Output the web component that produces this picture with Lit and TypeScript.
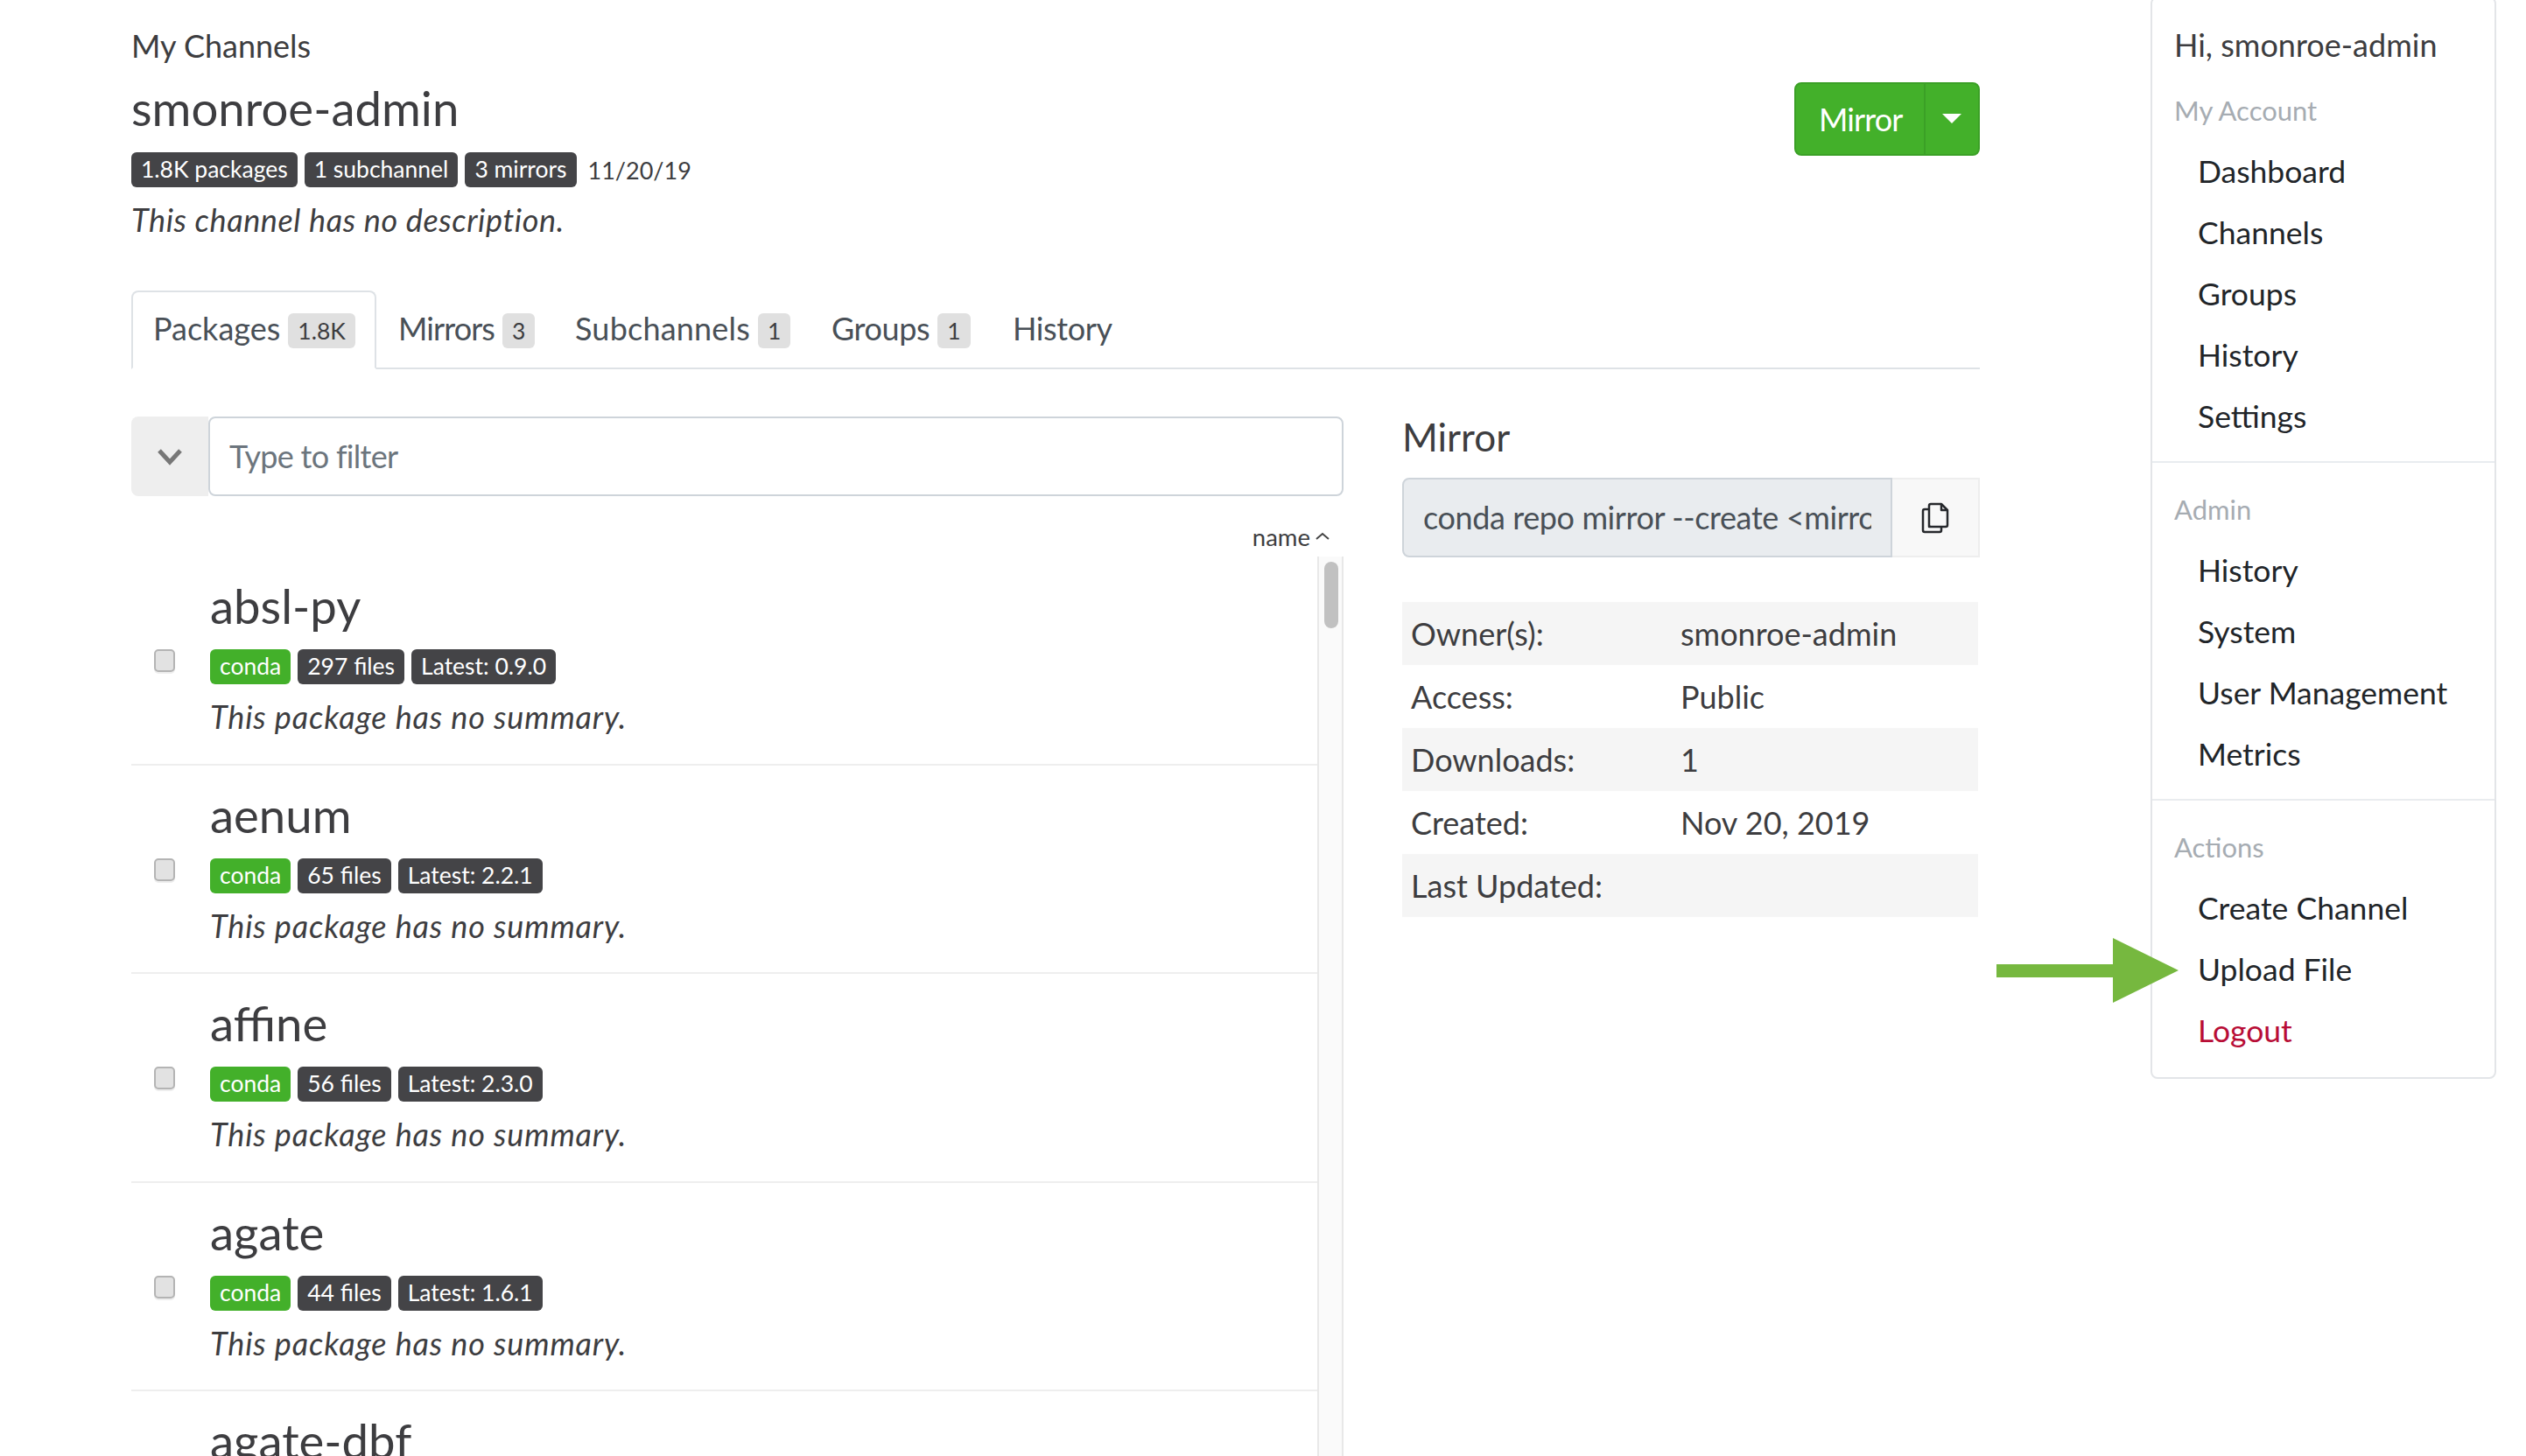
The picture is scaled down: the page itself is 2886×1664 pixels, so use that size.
import { LitElement, html, css } from "lit";
import { customElement } from "lit/decorators.js";

type Pkg = { name: string; files?: string; latest?: string };

const packages: Pkg[] = [
  { name: "absl-py", files: "297 files", latest: "Latest: 0.9.0" },
  { name: "aenum", files: "65 files", latest: "Latest: 2.2.1" },
  { name: "affine", files: "56 files", latest: "Latest: 2.3.0" },
  { name: "agate", files: "44 files", latest: "Latest: 1.6.1" },
  { name: "agate-dbf" },
];

const tabs = [
  { label: "Packages", count: "1.8K" },
  { label: "Mirrors", count: "3" },
  { label: "Subchannels", count: "1" },
  { label: "Groups", count: "1" },
  { label: "History", count: "" },
];

const details = [
  ["Owner(s):", "smonroe-admin"],
  ["Access:", "Public"],
  ["Downloads:", "1"],
  ["Created:", "Nov 20, 2019"],
  ["Last Updated:", ""],
];

const menu = [
  { title: "My Account", items: ["Dashboard", "Channels", "Groups", "History", "Settings"] },
  { title: "Admin", items: ["History", "System", "User Management", "Metrics"] },
  { title: "Actions", items: ["Create Channel", "Upload File", "Logout"] },
];

@customElement("app-root")
export class AppRoot extends LitElement {
  static styles = css`
    :host {
      display: block;
      position: relative;
      width: 2886px;
      height: 1664px;
      overflow: hidden;
      background: #fff;
      color: #3d3d40;
      font-family: "Lato", "Liberation Sans", sans-serif;
      font-size: 36px;
    }

    .page {
      display: flex;
      align-items: flex-start;
    }

    .main {
      width: 2112px;
      margin-left: 150px;
      flex: none;
    }

    .header {
      display: flex;
      justify-content: space-between;
      align-items: flex-start;
    }

    .crumb {
      margin-top: 30px;
      line-height: 44px;
    }

    .title {
      margin: 16px 0 0;
      font-size: 54.5px;
      font-weight: 400;
      line-height: 66px;
    }

    .badges {
      display: flex;
      align-items: center;
      gap: 8px;
    }

    .head-badges {
      margin-top: 18px;
    }

    .badge {
      display: flex;
      align-items: center;
      height: 40px;
      padding: 0 11px 2px;
      box-sizing: border-box;
      border-radius: 6px;
      background: #444447;
      color: #fff;
      font-size: 26.5px;
    }

    .badge.conda {
      background: #43b02a;
    }

    .date {
      margin-left: 5px;
      font-size: 27px;
    }

    .note {
      font-style: italic;
      line-height: 48px;
      letter-spacing: 0.6px;
    }

    .head-note {
      margin-top: 13px;
    }

    .split-button {
      display: flex;
      height: 84px;
      margin-top: 94px;
      border: 2px solid #3ba026;
      border-radius: 8px;
      background: #43b02a;
      color: #fff;
      box-sizing: border-box;
    }

    .split-label {
      display: flex;
      align-items: center;
      width: 148px;
      padding-left: 26px;
      box-sizing: border-box;
      border-right: 2px solid #3ba026;
      letter-spacing: -0.9px;
    }

    .split-caret {
      display: flex;
      justify-content: center;
      width: 60px;
      padding-top: 34px;
      box-sizing: border-box;
    }

    .caret {
      width: 0;
      height: 0;
      border-left: 11px solid transparent;
      border-right: 11px solid transparent;
      border-top: 11px solid #fff;
    }

    .tabs {
      display: flex;
      height: 90px;
      margin-top: 57px;
      border-bottom: 2px solid #dee2e6;
      box-sizing: border-box;
    }

    .tab {
      display: flex;
      align-items: center;
      gap: 9px;
      height: 88px;
      padding: 0 0 5px 22px;
      box-sizing: border-box;
      border: 2px solid transparent;
      border-bottom: 0;
      color: #495057;
      letter-spacing: -0.4px;
    }

    .tab:nth-child(1) {
      width: 280px;
      margin-right: 2px;
      padding-left: 23px;
      border-color: #dee2e6;
      border-radius: 8px 8px 0 0;
      height: 90px;
      border-bottom: 2px solid #fff;
      letter-spacing: 0;
    }

    .tab:nth-child(2) {
      width: 202px;
      padding-left: 21px;
      letter-spacing: -0.9px;
    }

    .tab:nth-child(3) {
      width: 292px;
      padding-left: 21px;
      letter-spacing: 0.2px;
    }

    .tab:nth-child(4) {
      width: 207px;
    }

    .count {
      display: flex;
      align-items: center;
      height: 40px;
      padding: 0 11px;
      border-radius: 6px;
      background: #e0e0e0;
      color: #3d3d40;
      font-size: 26.5px;
      letter-spacing: 0;
      margin-top: 6px;
    }

    .content {
      display: flex;
      gap: 67px;
      margin-top: 54px;
    }

    .packages {
      width: 1385px;
      flex: none;
    }

    .filter {
      display: flex;
      height: 91px;
    }

    .filter-toggle {
      display: flex;
      align-items: center;
      justify-content: center;
      width: 88px;
      background: #eee;
      border-radius: 8px 0 0 8px;
    }

    .filter-input {
      flex: 1;
      display: flex;
      align-items: center;
      padding: 0 0 2px 22px;
      border: 2px solid #ced4da;
      border-radius: 8px;
      color: #6c757d;
      letter-spacing: -0.7px;
    }

    .sort {
      display: flex;
      justify-content: flex-end;
      align-items: center;
      gap: 6px;
      height: 40px;
      margin-top: 26px;
      padding-right: 16px;
      font-size: 27.5px;
    }

    .list {
      display: flex;
      margin-top: 3px;
      height: 1100px;
    }

    .rows {
      flex: 1;
    }

    .row {
      display: flex;
      height: 238.5px;
      padding-top: 20px;
      box-sizing: border-box;
      border-bottom: 2px solid #eee;
    }

    .check {
      appearance: none;
      flex: none;
      width: 24px;
      height: 26px;
      margin: 86px 40px 0 26px;
      border: 2px solid #b4b4b4;
      border-radius: 5px;
      background: #e2e2e2;
      box-shadow: 0 2px 0 #eee;
      box-sizing: border-box;
    }

    .name {
      font-size: 54.5px;
      line-height: 72px;
    }

    .row .badges {
      margin-top: 14px;
    }

    .row .note {
      margin-top: 13px;
      letter-spacing: 0.85px;
    }

    .scrollbar {
      width: 30px;
      flex: none;
      box-sizing: border-box;
      background: #fafafa;
      border-left: 2px solid #e8e8e8;
      border-right: 2px solid #e8e8e8;
      padding-top: 6px;
    }

    .thumb {
      width: 16px;
      height: 76px;
      margin-left: 6px;
      border-radius: 8px;
      background: #c1c1c1;
    }

    .info {
      flex: 1;
      min-width: 0;
    }

    .info h4 {
      margin: 0;
      font-size: 44px;
      font-weight: 400;
      line-height: 46px;
    }

    .mirror-cmd {
      display: flex;
      height: 91px;
      margin-top: 24px;
    }

    .cmd-text {
      flex: 1;
      min-width: 0;
      display: flex;
      align-items: center;
      padding: 0 22px 2px 22px;
      border: 2px solid #ced4da;
      border-radius: 8px 0 0 8px;
      background: #e9ecef;
      color: #495057;
      white-space: nowrap;
      letter-spacing: -0.4px;
      box-sizing: border-box;
    }

    .cmd-text span {
      overflow: hidden;
    }

    .cmd-copy {
      display: flex;
      align-items: center;
      justify-content: center;
      width: 100px;
      flex: none;
      box-sizing: border-box;
      border: 2px solid #eee;
      border-left: 0;
      background: #f8f8f8;
    }

    .details {
      margin-top: 51px;
    }

    .detail {
      display: flex;
      align-items: center;
      height: 72px;
      padding-left: 10px;
      margin-right: 2px;
    }

    .detail:nth-child(odd) {
      background: #f5f5f5;
    }

    .detail-key {
      width: 308px;
    }

    .sidebar {
      width: 395px;
      margin-left: 195px;
      margin-top: -4px;
      height: 1237px;
      flex: none;
      box-sizing: border-box;
      border: 2px solid #e3e5e8;
      border-radius: 8px;
    }

    .greeting {
      margin: 31px 0 0 25px;
      line-height: 44px;
    }

    .section {
      padding-top: 18px;
      padding-bottom: 16px;
      border-bottom: 2px solid #e9ecef;
    }

    .section:first-of-type {
      padding-top: 0;
      padding-bottom: 19px;
    }

    .section:first-of-type .section-title {
      height: 66px;
      line-height: 66px;
      margin-bottom: 4px;
    }

    .section:last-of-type {
      border-bottom: 0;
    }

    .section-title {
      margin-left: 25px;
      height: 70px;
      line-height: 70px;
      font-size: 31px;
      color: #a6acb2;
    }

    .section-item {
      margin-left: 52px;
      height: 70px;
      line-height: 70px;
      font-size: 35.5px;
      color: #212529;
      white-space: nowrap;
    }

    .section-item.logout {
      color: #b80d36;
    }

    .pointer {
      position: absolute;
      left: 2281px;
      top: 1072px;
    }
  `;

  renderPackage(pkg: Pkg) {
    return html`<div class="row">
      <input class="check" type="checkbox" />
      <div>
        <div class="name">${pkg.name}</div>
        ${pkg.files
          ? html`<div class="badges">
                <span class="badge conda">conda</span>
                <span class="badge">${pkg.files}</span>
                <span class="badge">${pkg.latest}</span>
              </div>
              <div class="note">This package has no summary.</div>`
          : ""}
      </div>
    </div>`;
  }

  render() {
    return html`<div class="page">
        <div class="main">
          <div class="header">
            <div>
              <div class="crumb">My Channels</div>
              <h3 class="title">smonroe-admin</h3>
              <div class="badges head-badges">
                <span class="badge">1.8K packages</span>
                <span class="badge">1 subchannel</span>
                <span class="badge">3 mirrors</span>
                <span class="date">11/20/19</span>
              </div>
              <div class="note head-note">This channel has no description.</div>
            </div>
            <div class="split-button">
              <div class="split-label">Mirror</div>
              <div class="split-caret"><div class="caret"></div></div>
            </div>
          </div>

          <div class="tabs">
            ${tabs.map(
              (t) => html`<div class="tab">
                ${t.label} ${t.count ? html`<span class="count">${t.count}</span>` : ""}
              </div>`
            )}
          </div>

          <div class="content">
            <div class="packages">
              <div class="filter">
                <div class="filter-toggle">
                  <svg width="30" height="20" viewBox="0 0 30 20">
                    <path d="M3 3l12 13L27 3" fill="none" stroke="#777" stroke-width="5" />
                  </svg>
                </div>
                <div class="filter-input">Type to filter</div>
              </div>
              <div class="sort">
                name
                <svg width="16" height="10" viewBox="0 0 16 10">
                  <path d="M1 8l7-6 7 6" fill="none" stroke="#444" stroke-width="2" />
                </svg>
              </div>
              <div class="list">
                <div class="rows">${packages.map((p) => this.renderPackage(p))}</div>
                <div class="scrollbar"><div class="thumb"></div></div>
              </div>
            </div>

            <div class="info">
              <h4>Mirror</h4>
              <div class="mirror-cmd">
                <div class="cmd-text"><span>conda repo mirror --create &lt;mirror-name&gt;</span></div>
                <div class="cmd-copy">
                  <svg width="32" height="36" viewBox="0 0 32 36" fill="none" stroke="#26282c" stroke-width="2.5" stroke-linejoin="round">
                    <path d="M9 28V4a2 2 0 0 1 2-2h12l7 7v17a2 2 0 0 1-2 2H11a2 2 0 0 1-2-2z" />
                    <path d="M23 2v7h7" />
                    <path d="M9 8H4a2 2 0 0 0-2 2v22a2 2 0 0 0 2 2h17a2 2 0 0 0 2-2v-4" />
                  </svg>
                </div>
              </div>
              <div class="details">
                ${details.map(
                  ([k, v]) => html`<div class="detail">
                    <div class="detail-key">${k}</div>
                    <div>${v}</div>
                  </div>`
                )}
              </div>
            </div>
          </div>
        </div>

        <div class="sidebar">
          <div class="greeting">Hi, smonroe-admin</div>
          ${menu.map(
            (s) => html`<div class="section">
              <div class="section-title">${s.title}</div>
              ${s.items.map(
                (item) => html`<div class="section-item ${item === "Logout" ? "logout" : ""}">${item}</div>`
              )}
            </div>`
          )}
        </div>
      </div>

      <svg class="pointer" width="208" height="74" viewBox="0 0 208 74">
        <path d="M0 30h133V0l75 37-75 37V45H0z" fill="#76b83f" />
      </svg>`;
  }
}
